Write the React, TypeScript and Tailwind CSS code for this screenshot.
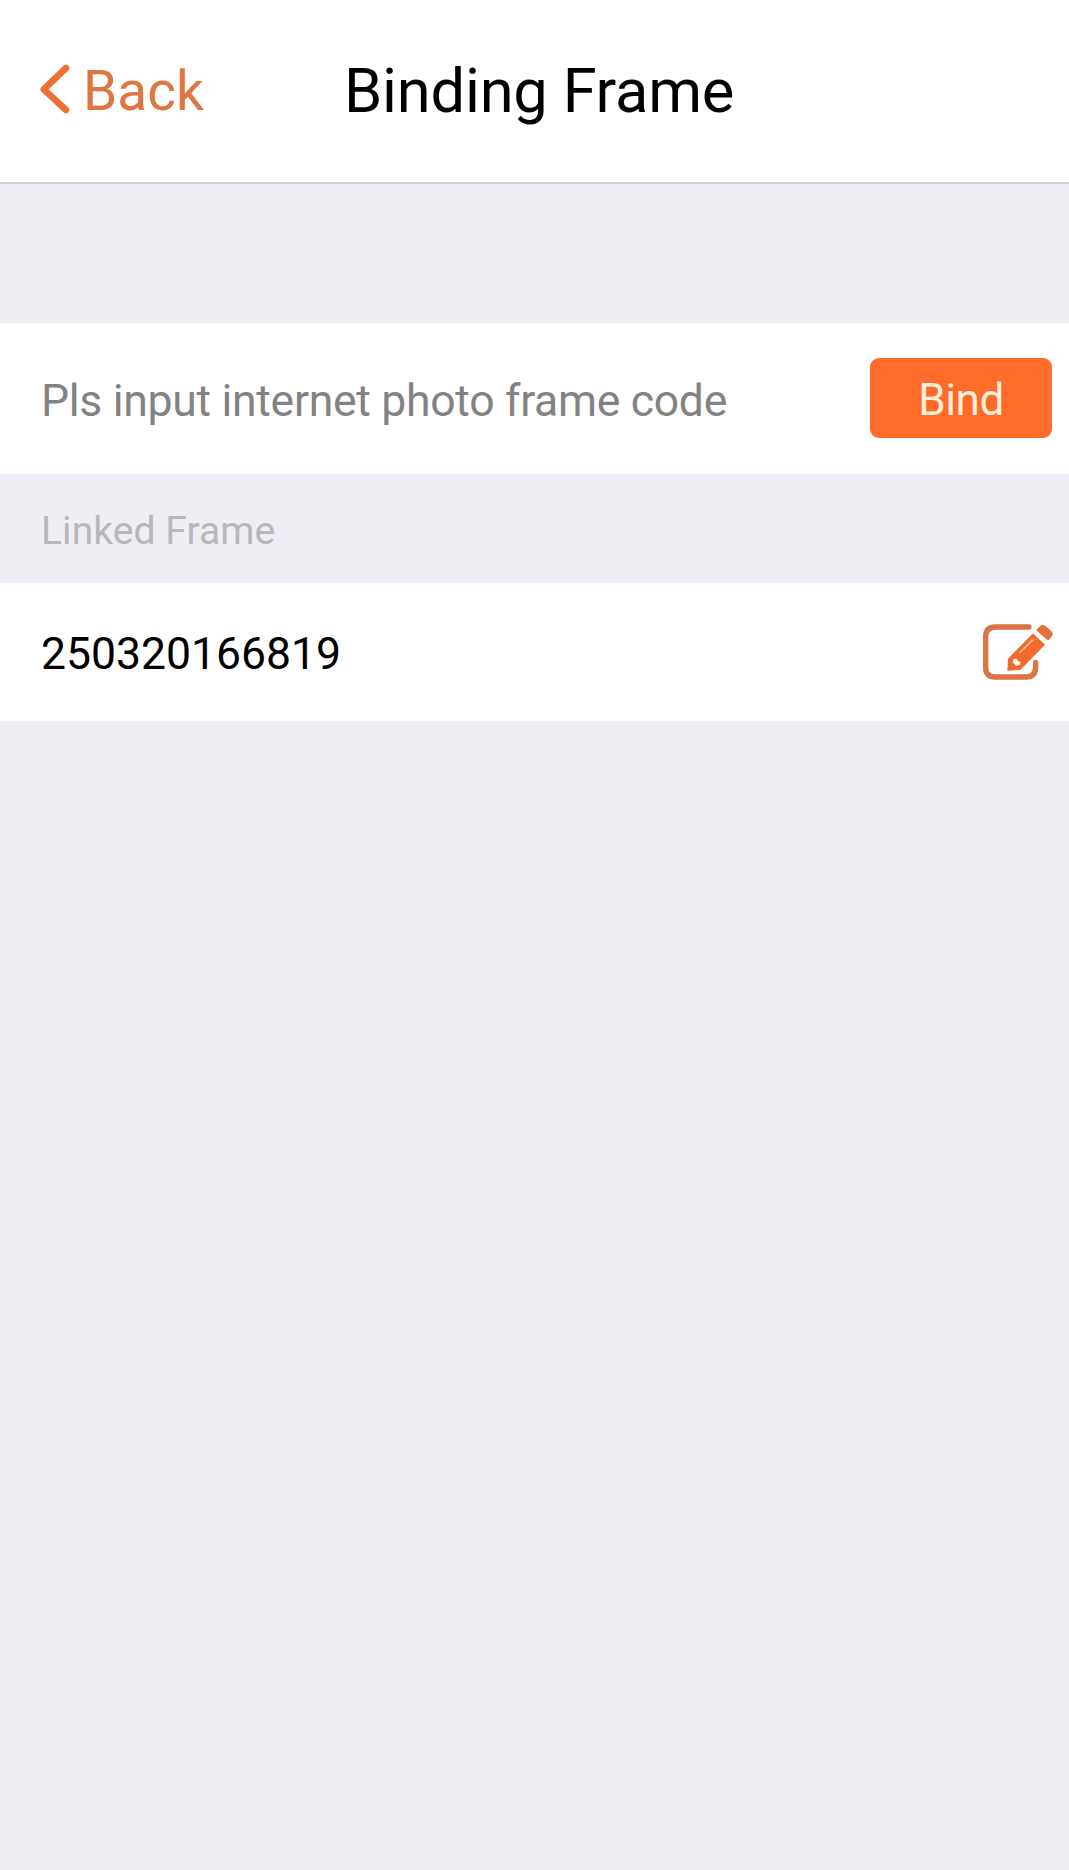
import React from "react";

function BackIcon() {
  return (
    <svg className="mb-1 block h-[56px] w-[38px] shrink-0" viewBox="0 0 38 56" fill="none" aria-hidden="true">
      <path d="M28 7 L5.8 28.3 L28 49" stroke="#ee6e34" strokeWidth="6.6" strokeLinecap="round" strokeLinejoin="round" />
    </svg>
  );
}

function EditIcon() {
  return (
    <svg className="block h-[58px] w-[72px]" viewBox="66 70 216 174" fill="none" aria-hidden="true">
      <path
        d="M207 82 H106 Q77 82 77 111 V204 Q77 232 106 232 H198 Q226 232 227 204 V188"
        stroke="#dd7444"
        strokeWidth="16"
        strokeLinecap="round"
      />
      <path d="M144 211 L146 178 L219 104 L252 135 L180 209 Z" fill="#f26a2e" stroke="#f26a2e" strokeWidth="4" strokeLinejoin="round" />
      <path d="M160 178 L170 177 L174 184 L182 187 L179 196 L169 199 L158 188 Z" fill="#fff6ea" />
      <path d="M180 158 L220 119" stroke="#ffbd88" strokeWidth="5" strokeLinecap="round" />
      <path
        d="M232 91 L241 82 Q248 75 256 82 L271 95 Q279 102 273 109 L264 119 Z"
        fill="#e8703c"
        stroke="#e8703c"
        strokeWidth="5"
        strokeLinejoin="round"
      />
    </svg>
  );
}

export default function App() {
  return (
    <div className="flex min-h-[1870px] w-full flex-col bg-[#efeef4] font-['Roboto',sans-serif] antialiased">
      <header className="grid h-[184px] grid-cols-[344px_1fr_345px] items-center border-b-2 border-[#cfced6] bg-white">
        <button className="flex items-center pl-[38px] text-[55px] leading-none text-[#df7540]">
          <BackIcon />
          <span className="pl-[7px]">Back</span>
        </button>
        <h1 className="pt-[2px] text-[61.4px] leading-none tracking-[-0.2px] whitespace-nowrap text-black">Binding Frame</h1>
      </header>

      <main className="pt-[139px]">
        <form className="flex h-[151px] items-center bg-white pr-[17px] pl-[41px]">
          <input
            className="mt-[6px] h-[64px] min-w-0 flex-1 bg-transparent p-0 text-[44.5px] tracking-[-0.29px] text-black outline-none placeholder:text-[#828282] placeholder:opacity-100"
            placeholder="Pls input internet photo frame code"
          />
          <button
            type="button"
            className="mb-[2px] flex h-[80px] w-[182px] items-center justify-center rounded-[9px] bg-[#ff6b29] pt-1 text-[44px] leading-none tracking-[-0.4px] text-[#ffeeda]"
          >
            Bind
          </button>
        </form>

        <h2 className="flex h-[109px] items-center pt-[6px] pl-[41px] text-[39px] leading-none tracking-[0.08px] text-[#b7b7bb]">Linked Frame</h2>

        <div className="flex h-[138px] items-center justify-between bg-white pr-[15px] pl-[41px]">
          <span className="pt-1 text-[44.5px] leading-none text-black">250320166819</span>
          <button aria-label="Edit">
            <EditIcon />
          </button>
        </div>
      </main>
    </div>
  );
}
